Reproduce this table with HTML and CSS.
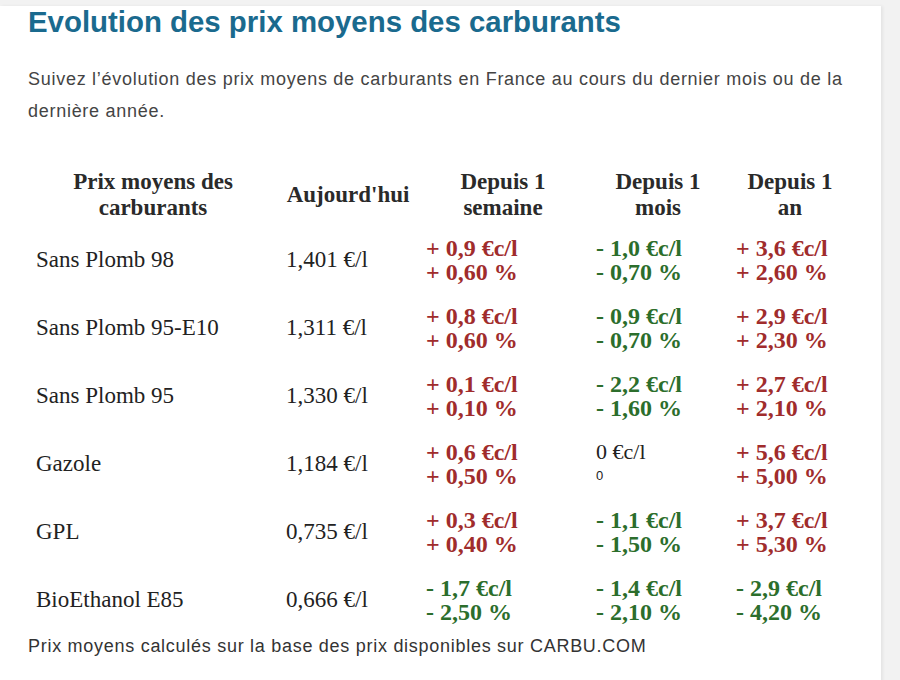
FILE: index.html
```html
<!DOCTYPE html>
<html lang="fr">
<head>
<meta charset="utf-8">
<title>Evolution des prix moyens des carburants</title>
<link rel="stylesheet" href="styles.css">
</head>
<body>
<main class="card">
  <h1 class="title">Evolution des prix moyens des carburants</h1>
  <p class="intro">Suivez l’évolution des prix moyens de carburants en France au cours du dernier mois ou de la dernière année.</p>
  <div class="table">
    <div class="th">Prix moyens des carburants</div>
    <div class="th">Aujourd'hui</div>
    <div class="th">Depuis 1 semaine</div>
    <div class="th">Depuis 1 mois</div>
    <div class="th">Depuis 1 an</div>

    <div class="td name">Sans Plomb 98</div>
    <div class="td price">1,401 €/l</div>
    <div class="td var up">+ 0,9 €c/l<br>+ 0,60 %</div>
    <div class="td var down">- 1,0 €c/l<br>- 0,70 %</div>
    <div class="td var up">+ 3,6 €c/l<br>+ 2,60 %</div>

    <div class="td name">Sans Plomb 95-E10</div>
    <div class="td price">1,311 €/l</div>
    <div class="td var up">+ 0,8 €c/l<br>+ 0,60 %</div>
    <div class="td var down">- 0,9 €c/l<br>- 0,70 %</div>
    <div class="td var up">+ 2,9 €c/l<br>+ 2,30 %</div>

    <div class="td name">Sans Plomb 95</div>
    <div class="td price">1,330 €/l</div>
    <div class="td var up">+ 0,1 €c/l<br>+ 0,10 %</div>
    <div class="td var down">- 2,2 €c/l<br>- 1,60 %</div>
    <div class="td var up">+ 2,7 €c/l<br>+ 2,10 %</div>

    <div class="td name">Gazole</div>
    <div class="td price">1,184 €/l</div>
    <div class="td var up">+ 0,6 €c/l<br>+ 0,50 %</div>
    <div class="td var flat"><span class="flat-val">0 €c/l</span><span class="flat-pct">0</span></div>
    <div class="td var up">+ 5,6 €c/l<br>+ 5,00 %</div>

    <div class="td name">GPL</div>
    <div class="td price">0,735 €/l</div>
    <div class="td var up">+ 0,3 €c/l<br>+ 0,40 %</div>
    <div class="td var down">- 1,1 €c/l<br>- 1,50 %</div>
    <div class="td var up">+ 3,7 €c/l<br>+ 5,30 %</div>

    <div class="td name">BioEthanol E85</div>
    <div class="td price">0,666 €/l</div>
    <div class="td var down">- 1,7 €c/l<br>- 2,50 %</div>
    <div class="td var down">- 1,4 €c/l<br>- 2,10 %</div>
    <div class="td var down">- 2,9 €c/l<br>- 4,20 %</div>
  </div>
  <p class="source">Prix moyens calculés sur la base des prix disponibles sur CARBU.COM</p>
</main>
</body>
</html>
```
FILE: styles.css
```css
html, body {
  margin: 0;
  padding: 0;
}
body {
  background: #f2f2f2;
  padding-top: 6px;
  font-family: "Liberation Sans", Arial, sans-serif;
  height: 674px;
  overflow: hidden;
}
.card {
  width: 853px;
  background: #ffffff;
  padding: 0 0 40px 28px;
  box-shadow: 2px 0 3px rgba(0, 0, 0, 0.06);
}
.title {
  margin: 0;
  font-size: 29.4px;
  line-height: 32px;
  font-weight: bold;
  color: #1a6a8e;
}
.intro {
  margin: 25px 0 0;
  font-size: 18px;
  letter-spacing: 0.72px;
  line-height: 32px;
  color: #444444;
  width: 830px;
}
.table {
  display: grid;
  grid-template-columns: 250px 140px 170px 140px 124px;
  margin-top: 42px;
  font-family: "Liberation Serif", "Times New Roman", serif;
  color: #222222;
}
.th {
  font-weight: bold;
  font-size: 23px;
  line-height: 26px;
  text-align: center;
  padding: 0 8px 5px;
  display: flex;
  align-items: center;
  justify-content: center;
  color: #2a2a2a;
}
.td {
  padding: 10px 8px;
  display: flex;
  flex-direction: column;
  justify-content: center;
  font-size: 23px;
  line-height: 24px;
}
.var {
  display: block;
  font-weight: bold;
  font-size: 24px;
}
.up {
  color: #a02c2c;
}
.down {
  color: #2c6e2c;
}
.flat {
  font-weight: normal;
  color: #222222;
  display: flex;
  flex-direction: column;
  justify-content: flex-start;
}
.flat-val {
  font-size: 22px;
  line-height: 24px;
}
.flat-pct {
  font-size: 13px;
  line-height: 24px;
  font-family: "Liberation Sans", Arial, sans-serif;
}
.source {
  margin: 0;
  font-size: 18px;
  letter-spacing: 0.72px;
  line-height: 24px;
  color: #333333;
}
```
